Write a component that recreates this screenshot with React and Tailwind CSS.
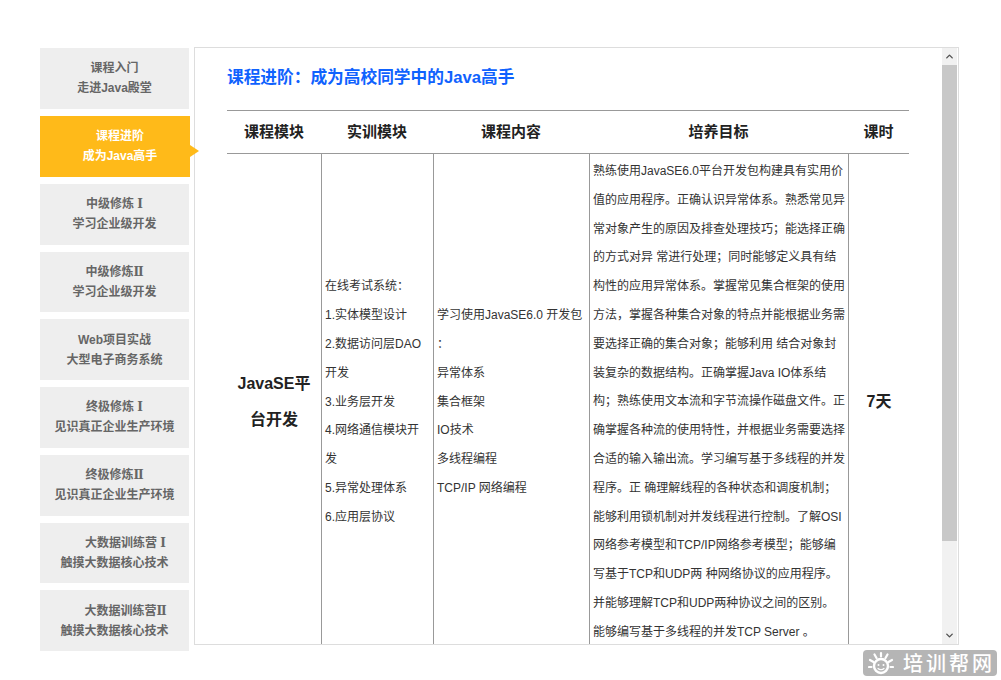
import { ChevronUp, ChevronDown } from "lucide-react";

const navItems = [
  { title: "课程入门", sub: "走进Java殿堂" },
  { title: "课程进阶", sub: "成为Java高手", active: true },
  { title: "中级修炼 ", num: "Ⅰ", sub: "学习企业级开发" },
  { title: "中级修炼", num: "Ⅱ", sub: "学习企业级开发" },
  { title: "Web项目实战", sub: "大型电子商务系统" },
  { title: "终极修炼 ", num: "Ⅰ", sub: "见识真正企业生产环境" },
  { title: "终极修炼", num: "Ⅱ", sub: "见识真正企业生产环境" },
  { title: "大数据训练营 ", num: "Ⅰ", sub: "触摸大数据核心技术", shift: true },
  { title: "大数据训练营", num: "Ⅱ", sub: "触摸大数据核心技术", shift: true },
];

const projectLines = [
  "在线考试系统：",
  "1.实体模型设计",
  "2.数据访问层DAO开发",
  "3.业务层开发",
  "4.网络通信模块开发",
  "5.异常处理体系",
  "6.应用层协议",
];

const contentLines = [
  "学习使用JavaSE6.0 开发包",
  "：",
  "异常体系",
  "集合框架",
  "IO技术",
  "多线程编程",
  "TCP/IP 网络编程",
];

const goals =
  "熟练使用JavaSE6.0平台开发包构建具有实用价值的应用程序。正确认识异常体系。熟悉常见异常对象产生的原因及排查处理技巧；能选择正确的方式对异 常进行处理；同时能够定义具有结构性的应用异常体系。掌握常见集合框架的使用方法，掌握各种集合对象的特点并能根据业务需要选择正确的集合对象；能够利用 结合对象封装复杂的数据结构。正确掌握Java IO体系结构；熟练使用文本流和字节流操作磁盘文件。正确掌握各种流的使用特性，并根据业务需要选择合适的输入输出流。学习编写基于多线程的并发程序。正 确理解线程的各种状态和调度机制；能够利用锁机制对并发线程进行控制。了解OSI网络参考模型和TCP/IP网络参考模型；能够编写基于TCP和UDP两 种网络协议的应用程序。并能够理解TCP和UDP两种协议之间的区别。能够编写基于多线程的并发TCP Server 。";

function NavItem({ item }) {
  if (item.active) {
    return (
      <div className="relative z-10 flex h-[61px] w-[150px] flex-col items-center justify-center bg-[#ffba19] pl-[10px] text-[12px] font-bold leading-[20px] text-white">
        <span>{item.title}</span>
        <span>{item.sub}</span>
        <span className="absolute left-full top-[29px] h-0 w-0 border-y-[6px] border-l-[9px] border-y-transparent border-l-[#ffba19]" />
      </div>
    );
  }
  return (
    <div className="flex h-[60.75px] w-[149px] flex-col items-center justify-center bg-[#eeeeee] text-[12px] font-bold leading-[20px] text-[#666666]">
      <span className={item.shift ? "whitespace-pre pl-[22px]" : "whitespace-pre"}>
        {item.title}
        {item.num && <span className="[font-family:'DejaVu_Serif',serif]">{item.num}</span>}
      </span>
      <span>{item.sub}</span>
    </div>
  );
}

function Logo() {
  return (
    <div className="flex h-[26px] w-[134px] items-center rounded-[4px] bg-[#b5b5b5] pl-[5px] text-white">
      <svg width="26" height="25" viewBox="0 0 26 25" fill="none" stroke="white" strokeLinecap="round">
        <circle cx="13" cy="15" r="7" strokeWidth="2.4" />
        <circle cx="10.5" cy="14" r="1" fill="white" stroke="none" />
        <circle cx="15.5" cy="14" r="1" fill="white" stroke="none" />
        <path d="M10 17.5c1.5 1.6 4.500 1.600 6 0" strokeWidth="1.200" />
        <path d="M13 2v3.500M6.500 3.500l2 3.500M19.500 3.500l-2 3.500M2 9l3.500 2M24 9l-3.500 2M1 16h2.500M25 16h-2.500" strokeWidth="2.200" />
      </svg>
      <span className="ml-[9px] whitespace-nowrap text-[20px] font-medium leading-none tracking-[3px] [font-family:'Noto_Sans_CJK_SC',sans-serif]">
        培训帮网
      </span>
    </div>
  );
}

export default function App() {
  return (
    <div className="relative h-[680px] w-[1001px] overflow-hidden bg-white [font-family:'Liberation_Sans','Noto_Sans_CJK_SC',sans-serif]">
      <div className="flex pl-[40px] pt-[47px]">
        <div className="flex flex-col gap-[7px] pt-[1px]">
          {navItems.map((item) => (
            <NavItem key={item.title + item.sub} item={item} />
          ))}
        </div>

        <div className="ml-[4px] flex h-[598px] w-[765px] border border-[#dddddd] bg-white">
          <div className="flex-1 overflow-hidden pl-[32px]">
            <h2 className="pt-[18px] text-[16.7px] font-bold leading-[24px] text-[#0f62fe]">
              课程进阶：成为高校同学中的Java高手
            </h2>

            {/* 课程表 */}
            <div className="mt-[20px] w-[682px] border-t border-[#999999] text-[#333333]">
              <div className="flex h-[43px] items-center border-b border-[#999999] text-[15px] font-bold text-[#222222]">
                <div className="w-[94px] text-center">课程模块</div>
                <div className="w-[112px] text-center">实训模块</div>
                <div className="w-[156px] text-center">课程内容</div>
                <div className="w-[259px] text-center">培养目标</div>
                <div className="flex-1 text-center">课时</div>
              </div>
              <div className="flex h-[700px] text-[12px] leading-[28.8px]">
                <div className="flex h-[496px] w-[94px] items-center justify-center px-[7px] text-center text-[16px] font-bold leading-[36px] text-[#222222]">
                  JavaSE平台开发
                </div>
                <div className="flex w-[112px] flex-col border-l border-[#999999]">
                  <div className="flex h-[496px] flex-col justify-center px-[3px]">
                    {projectLines.map((line) => (
                      <p key={line}>{line}</p>
                    ))}
                  </div>
                </div>
                <div className="w-[156px] border-l border-[#999999]">
                  <div className="flex h-[496px] flex-col justify-center px-[3px]">
                    {contentLines.map((line) => (
                      <p key={line} className="whitespace-nowrap">
                        {line}
                      </p>
                    ))}
                  </div>
                </div>
                <div className="w-[259px] border-l border-[#999999] pl-[3px] pr-[2px] pt-[3px]">
                  <p>{goals}</p>
                </div>
                <div className="flex h-[496px] flex-1 items-center justify-center border-l border-[#999999] text-[16px] font-bold text-[#222222]">
                  7天
                </div>
              </div>
            </div>
          </div>

          {/* 滚动条 */}
          <div className="mr-[1px] flex w-[15px] flex-col bg-[#f1f1f1]">
            <div className="flex h-[17px] items-center justify-center text-[#505050]">
              <ChevronUp size={11} strokeWidth={3} />
            </div>
            <div className="h-[476px] bg-[#c8c8c8]" />
            <div className="flex-1" />
            <div className="flex h-[17px] items-center justify-center text-[#505050]">
              <ChevronDown size={11} strokeWidth={3} />
            </div>
          </div>
        </div>
      </div>

      <div className="absolute left-[863px] top-[650px]">
        <Logo />
      </div>
      <div className="absolute right-0 top-[60px] h-[160px] w-[1px] bg-[#fff3f3]" />
    </div>
  );
}
